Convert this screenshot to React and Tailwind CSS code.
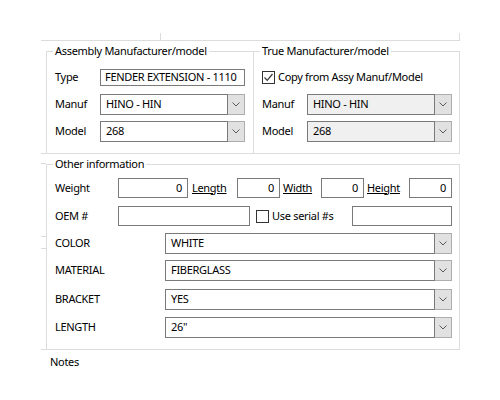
import React from "react";

const Chevron = () => (
  <svg width="8" height="5" viewBox="0 0 8 5" fill="none">
    <path d="M0.5 0.5 L4 4 L7.5 0.5" stroke="#5a5a5a" strokeWidth="1" />
  </svg>
);

function Combo({ value, width, disabled }) {
  return (
    <div className={`flex h-[21px] ${width}`}>
      <div
        className={`flex flex-1 items-center border border-[#7a7a7a] pl-[5px] ${
          disabled ? "bg-[#f0f0f0]" : "bg-white"
        }`}
      >
        {value}
      </div>
      <div className="flex w-[17px] items-center justify-center border-y border-r border-[#adadad] bg-[#e1e1e1]">
        <Chevron />
      </div>
    </div>
  );
}

function TextBox({ value = "", width, right }) {
  return (
    <div
      className={`flex h-[20px] shrink-0 items-center border border-[#7a7a7a] bg-white px-[5px] ${width} ${
        right ? "justify-end" : ""
      }`}
    >
      {value}
    </div>
  );
}

function CheckBox({ checked }) {
  return (
    <div className="flex h-[13px] w-[13px] items-center justify-center border border-[#333333] bg-white">
      {checked && (
        <svg width="11" height="11" viewBox="0 0 11 11" fill="none">
          <path d="M1.5 5.5 L4.2 8.3 L9.5 2" stroke="#333333" strokeWidth="1.2" />
        </svg>
      )}
    </div>
  );
}

function Legend({ children }) {
  return <legend className="ml-[6px] px-[2px] leading-[16px]">{children}</legend>;
}

export default function App() {
  return (
    <div className="h-[400px] w-[500px] overflow-hidden bg-white pt-[33px] font-['Noto_Sans',sans-serif] text-[11px] tracking-[-0.3px] text-black">
      {/* bottom edge of the panel above */}
      <div className="ml-[41px] flex h-[8px]">
        <div className="w-[119px] border-b border-[#dcdcdc]" />
        <div className="w-[300px] border-x border-b border-[#dcdcdc]" />
      </div>

      {/* manufacturer groups */}
      <div className="ml-[41px] mt-[2px] flex">
        <div className="flex w-[5px] flex-col justify-end">
          <div className="h-px bg-[#dcdcdc]" />
        </div>
        <fieldset className="w-[207px] border border-r-0 border-[#dcdcdc]">
          <Legend>Assembly Manufacturer/model</Legend>
          <div className="flex flex-col pb-[11px] pl-[8px] pt-[10px]">
            <div className="flex items-center">
              <span className="w-[45px]">Type</span>
              <div className="flex h-[17px] w-[145px] items-center whitespace-nowrap border border-[#7a7a7a] px-[4px]">
                FENDER EXTENSION - 1110
              </div>
            </div>
            <div className="mt-[8px] flex items-center">
              <span className="w-[45px]">Manuf</span>
              <Combo value="HINO - HIN" width="w-[145px]" />
            </div>
            <div className="mt-[6px] flex items-center">
              <span className="w-[45px]">Model</span>
              <Combo value="268" width="w-[145px]" />
            </div>
          </div>
        </fieldset>
        <fieldset className="w-[207px] border border-[#dcdcdc]">
          <Legend>True Manufacturer/model</Legend>
          <div className="flex flex-col pb-[11px] pl-[8px] pt-[10px]">
            <div className="flex h-[17px] items-center gap-[3px]">
              <CheckBox checked />
              <span>Copy from Assy Manuf/Model</span>
            </div>
            <div className="mt-[8px] flex items-center">
              <span className="w-[45px]">Manuf</span>
              <Combo value="HINO - HIN" width="w-[145px]" disabled />
            </div>
            <div className="mt-[6px] flex items-center">
              <span className="w-[45px]">Model</span>
              <Combo value="268" width="w-[145px]" disabled />
            </div>
          </div>
        </fieldset>
      </div>

      {/* other information */}
      <div className="ml-[41px] mt-[2px] flex">
        <div className="flex w-[5px] flex-col">
          <div className="mt-[7px] h-px bg-[#dcdcdc]" />
          <div className="mt-[72px] h-px bg-[#dcdcdc]" />
          <div className="mt-[11px] h-px bg-[#dcdcdc]" />
          <div className="mt-[100px] h-px bg-[#dcdcdc]" />
        </div>
        <fieldset className="w-[414px] border border-[#dcdcdc]">
          <Legend>Other information</Legend>
          <div className="flex flex-col pb-[10px] pl-[8px] pr-[7px] pt-[6px]">
            <div className="flex items-center">
              <span className="w-[63px]">Weight</span>
              <TextBox value="0" width="w-[70px]" right />
              <span className="ml-[4px] w-[45px] underline">Length</span>
              <TextBox value="0" width="w-[43px]" right />
              <span className="ml-[3px] w-[38px] underline">Width</span>
              <TextBox value="0" width="w-[43px]" right />
              <span className="ml-[3px] w-[42px] underline">Height</span>
              <TextBox value="0" width="w-[43px]" right />
            </div>
            <div className="mt-[8px] flex items-center">
              <span className="w-[63px]">OEM #</span>
              <TextBox width="w-[132px]" />
              <div className="ml-[6px]">
                <CheckBox />
              </div>
              <span className="ml-[3px] w-[80px]">Use serial #s</span>
              <TextBox width="w-[100px]" />
            </div>
            <div className="mt-[7px] flex items-center">
              <span className="w-[110px]">COLOR</span>
              <Combo value="WHITE" width="w-[287px]" />
            </div>
            <div className="mt-[6px] flex items-center">
              <span className="w-[110px]">MATERIAL</span>
              <Combo value="FIBERGLASS" width="w-[287px]" />
            </div>
            <div className="mt-[8px] flex items-center">
              <span className="w-[110px]">BRACKET</span>
              <Combo value="YES" width="w-[287px]" />
            </div>
            <div className="mt-[7px] flex items-center">
              <span className="w-[110px]">LENGTH</span>
              <Combo value={'26"'} width="w-[287px]" />
            </div>
          </div>
        </fieldset>
      </div>

      <div className="ml-[50px] mt-[4px]">Notes</div>
    </div>
  );
}
